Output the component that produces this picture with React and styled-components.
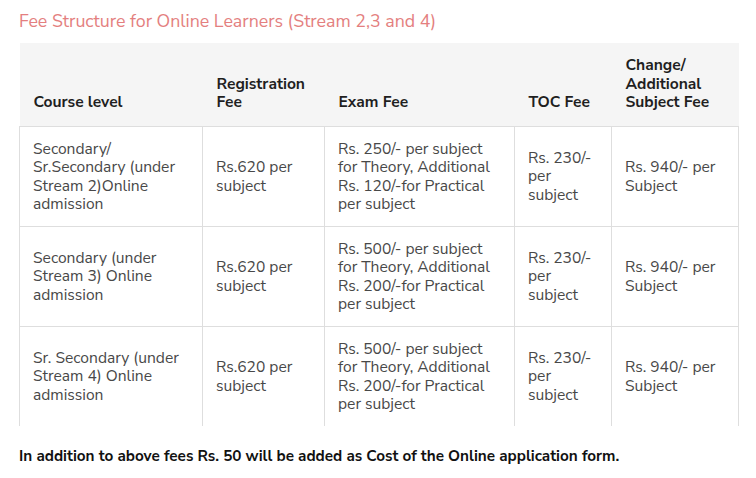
import React from "react";
import styled, { createGlobalStyle } from "styled-components";

const Global = createGlobalStyle`
  html, body { margin: 0; padding: 0; background: #fff; }
  body { font-family: "Nunito Sans", Lato, "Open Sans", sans-serif; }
  *, *::before, *::after { box-sizing: border-box; }
`;

const Page = styled.div`
  padding: 10px 18px 0 19px;
`;

const Title = styled.h3`
  margin: 0 0 11px;
  font-size: 17.8px;
  line-height: 22px;
  font-weight: 400;
  color: #e47f80;
`;

const Table = styled.table`
  width: 719px;
  border-collapse: collapse;
  table-layout: fixed;
`;

const Col = styled.col`
  width: ${(p) => p.$w}px;
`;

const Th = styled.th`
  background: #f5f5f5;
  text-align: left;
  vertical-align: bottom;
  font-weight: 700;
  font-size: 15.6px;
  line-height: 18.5px;
  color: #1f1f1f;
  padding: 13px 12px 14px 14px;
  border-bottom: 1px solid #dedede;
`;

const Td = styled.td`
  vertical-align: middle;
  font-size: 15.6px;
  line-height: 18.5px;
  color: #484848;
  padding: 13px 12px 12px 13px;
  border-left: 1px solid #dedede;
  border-right: 1px solid #dedede;
  border-bottom: ${(p) => (p.$last ? "none" : "1px solid #dedede")};
`;

const Note = styled.p`
  margin: 21px 0 0;
  font-size: 15.3px;
  font-weight: 700;
  color: #111;
  line-height: 18px;
`;

const cols = [
  { label: "Course level", w: 183 },
  { label: "Registration Fee", w: 122 },
  { label: "Exam Fee", w: 190 },
  { label: "TOC Fee", w: 97 },
  { label: "Change/ Additional Subject Fee", w: 127 },
];

const rows = [
  [
    "Secondary/ Sr.Secondary (under Stream 2)Online admission",
    "Rs.620 per subject",
    "Rs. 250/- per subject for Theory, Additional Rs. 120/-for Practical per subject",
    "Rs. 230/- per subject",
    "Rs. 940/- per Subject",
  ],
  [
    "Secondary (under Stream 3) Online admission",
    "Rs.620 per subject",
    "Rs. 500/- per subject for Theory, Additional Rs. 200/-for Practical per subject",
    "Rs. 230/- per subject",
    "Rs. 940/- per Subject",
  ],
  [
    "Sr. Secondary (under Stream 4) Online admission",
    "Rs.620 per subject",
    "Rs. 500/- per subject for Theory, Additional Rs. 200/-for Practical per subject",
    "Rs. 230/- per subject",
    "Rs. 940/- per Subject",
  ],
];

export default function App() {
  return (
    <Page>
      <Global />
      <Title>Fee Structure for Online Learners (Stream 2,3 and 4)</Title>
      <Table>
        <colgroup>
          {cols.map((c) => (
            <Col key={c.label} $w={c.w} />
          ))}
        </colgroup>
        <thead>
          <tr>
            {cols.map((c) => (
              <Th key={c.label}>{c.label}</Th>
            ))}
          </tr>
        </thead>
        <tbody>
          {rows.map((r, i) => (
            <tr key={i}>
              {r.map((cell, j) => (
                <Td key={j} $last={i === rows.length - 1}>
                  {cell}
                </Td>
              ))}
            </tr>
          ))}
        </tbody>
      </Table>
      <Note>
        In addition to above fees Rs. 50 will be added as Cost of the Online
        application form.
      </Note>
    </Page>
  );
}
